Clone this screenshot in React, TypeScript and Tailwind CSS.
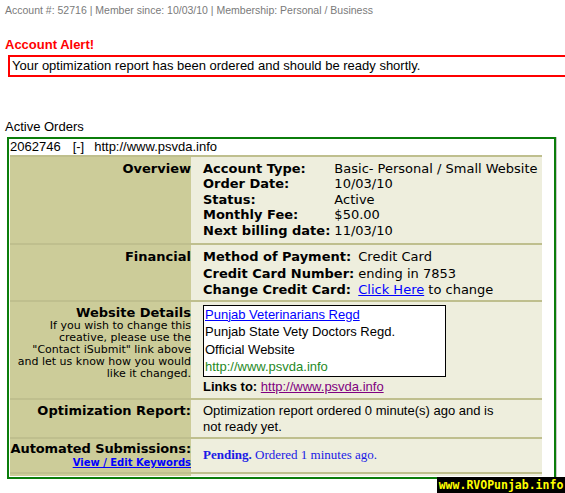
import React from 'react';

// Verdana-ish text uses DejaVu Sans, Arial-ish uses Liberation Sans
const verdana = "font-['DejaVu_Sans',Verdana,sans-serif]";

const Label: React.FC<{ children: React.ReactNode; className?: string }> = ({ children, className }) => (
  <div className={`w-[181px] shrink-0 bg-[#cccc99] text-right ${className ?? ''}`}>{children}</div>
);

const Value: React.FC<{ children: React.ReactNode; className?: string }> = ({ children, className }) => (
  <div className={`flex-1 bg-[#eeeedd] pl-[12px] ${className ?? ''}`}>{children}</div>
);

export default function App() {
  return (
    <div className="relative w-[565px] h-[493px] overflow-hidden bg-white text-black font-['Liberation_Sans',Arial,sans-serif]">
      <div className="pl-[5px] pt-[4px] text-[10.5px] leading-[13px] text-[#7a7a7a] whitespace-nowrap">
        Account #: 52716 | Member since: 10/03/10 | Membership: Personal / Business
      </div>

      <div className="mt-[20px] pl-[5px] text-[13px] leading-[15px] font-bold text-[#ff0000]">Account Alert!</div>
      <div className="mt-[3px] ml-[8px] w-[600px] h-[22px] border-2 border-[#ff0000] pl-[2px] text-[13px] leading-[18px] whitespace-nowrap">
        Your optimization report has been ordered and should be ready shortly.
      </div>

      <div className="mt-[42px] pl-[5px] text-[13px] leading-[15px]">Active Orders</div>

      <div className="mt-[3px] ml-[7px] w-[549px] border-2 border-[#0b7d0b] pb-[1px] shadow-[1px_0_0_#c8c8c8]">
        <div className="flex h-[16px] pl-[1px] text-[13px] leading-[16px] whitespace-nowrap">
          <span>2062746</span>
          <span className="ml-[12px]">[-]</span>
          <span className="ml-[10px]">http://www.psvda.info</span>
        </div>

        <div className={`w-[532px] ml-[1px] text-[13px] ${verdana}`}>
          {/* Overview */}
          <div className="flex border-t-2 border-[#bfbf8e]">
            <Label className="pt-[4px] font-bold leading-[15.4px]">Overview</Label>
            <Value className="pt-[4px] pb-[5px]">
              <div className="grid grid-cols-[auto_auto] justify-start gap-x-[4px] leading-[15.4px] whitespace-nowrap">
                <b>Account Type:</b><span>Basic- Personal / Small Website</span>
                <b>Order Date:</b><span>10/03/10</span>
                <b>Status:</b><span>Active</span>
                <b>Monthly Fee:</b><span>$50.00</span>
                <b>Next billing date:</b><span>11/03/10</span>
              </div>
            </Value>
          </div>

          {/* Financial */}
          <div className="flex border-t-2 border-[#bfbf8e]">
            <Label className="pt-[4px] font-bold leading-[16.5px]">Financial</Label>
            <Value className="pt-[4px] pb-[1px]">
              <div className="grid grid-cols-[auto_auto] justify-start gap-x-[4px] leading-[16.5px] whitespace-nowrap">
                <b>Method of Payment:</b><span>Credit Card</span>
                <b>Credit Card Number:</b><span>ending in 7853</span>
                <b>Change Credit Card:</b>
                <span>
                  <a href="#" className="text-[#0000ff] underline">Click Here</a> to change
                </span>
              </div>
            </Value>
          </div>

          {/* Website Details */}
          <div className="flex border-t-2 border-[#bfbf8e]">
            <Label className="pt-[3px]">
              <div className="font-bold leading-[15px]">Website Details</div>
              <div className="text-[11px] leading-[12px]">
                If you wish to change this<br />
                creative, please use the<br />
                "Contact iSubmit" link above<br />
                and let us know how you would<br />
                like it changed.
              </div>
            </Label>
            <Value className="pt-[3px] pb-[3px] font-['Liberation_Sans',Arial,sans-serif]">
              <div className="w-[243px] border border-black bg-white pl-[1px] leading-[17.5px] whitespace-nowrap">
                <div><a href="#" className="text-[#0000ff] underline">Punjab Veterinarians Regd</a></div>
                <div>Punjab State Vety Doctors Regd.</div>
                <div>Official Website</div>
                <div className="text-[#1f8a1f]">http://www.psvda.info</div>
              </div>
              <div className="mt-[2px] leading-[16px]">
                <b>Links to:</b> <a href="#" className="text-[#800080] underline">http://www.psvda.info</a>
              </div>
            </Value>
          </div>

          {/* Optimization Report */}
          <div className="flex border-t-2 border-[#bfbf8e]">
            <Label className="pt-[3px] font-bold leading-[16px]">Optimization Report:</Label>
            <Value className="pt-[3px] pb-[2px] leading-[16px] font-['Liberation_Sans',Arial,sans-serif]">
              Optimization report ordered 0 minute(s) ago and is<br />
              not ready yet.
            </Value>
          </div>

          {/* Automated Submissions */}
          <div className="flex border-t-2 border-[#bfbf8e]">
            <Label className="pt-[2px] pb-[3px] whitespace-nowrap">
              <div className="font-bold leading-[16px] tracking-[-0.1px]">Automated Submissions:</div>
              <div className="text-[10px] leading-[12px] font-bold">
                <a href="#" className="text-[#0000ff] underline">View / Edit Keywords</a>
              </div>
            </Label>
            <Value className="flex items-center text-[#1a1ae6] font-['Liberation_Serif','Times_New_Roman',serif]">
              <span><b>Pending.</b> Ordered 1 minutes ago.</span>
            </Value>
          </div>

          <div className="flex h-[4px] border-t-2 border-[#bfbf8e]">
            <div className="w-[181px] bg-[#cccc99]" />
            <div className="flex-1 bg-[#eeeedd]" />
          </div>
        </div>
      </div>

      <div className="absolute right-0 bottom-0 w-[128px] h-[16px] bg-black text-center text-[11.5px] leading-[16px] font-bold text-[#ffff00] font-['DejaVu_Sans_Mono',monospace]">
        www.RVOPunjab.info
      </div>
    </div>
  );
}
